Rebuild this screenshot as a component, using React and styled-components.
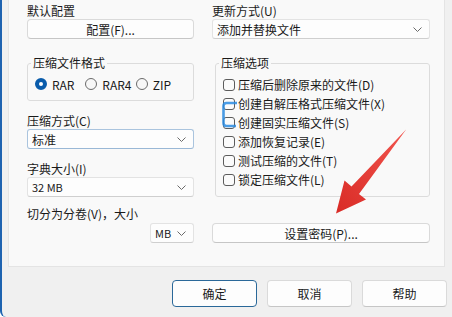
import styled, { createGlobalStyle } from "styled-components";

const GlobalStyle = createGlobalStyle`
  html, body { margin: 0; padding: 0; }
  body {
    font-family: "Noto Sans CJK SC", "Noto Sans", sans-serif;
    font-size: 12px;
    color: #1a1a1a;
  }
`;

const Window = styled.div`
  position: relative;
  width: 452px;
  height: 317px;
  overflow: hidden;
  box-sizing: border-box;
  background: #f0f0f0;
  border-left: 2px solid #1e63b0;
  border-bottom-left-radius: 6px;
  display: flex;
  flex-direction: column;
`;

const Panel = styled.div`
  margin-left: 6px;
  width: 437px;
  height: 267px;
  box-sizing: border-box;
  background: #f9f9f9;
  border: 1px solid #e4e4e4;
  border-top: none;
  padding-left: 18px;
  display: grid;
  grid-template-columns: 167px 218px;
  column-gap: 18px;
  align-items: start;
`;

const Column = styled.div`
  display: flex;
  flex-direction: column;
`;

const Label = styled.div`
  line-height: 16px;
  height: 16px;
  margin-top: ${(p) => p.$top || 0}px;
  white-space: nowrap;
`;

const Button = styled.button`
  height: ${(p) => p.$h || 20}px;
  width: ${(p) => (p.$w ? `${p.$w}px` : "100%")};
  margin-top: ${(p) => p.$top || 0}px;
  padding: 0;
  box-sizing: border-box;
  font-family: inherit;
  font-size: 12px;
  color: #1a1a1a;
  background: #fdfdfd;
  border: 1px solid ${(p) => (p.$primary ? "#2a6899" : "#dadada")};
  border-bottom-color: ${(p) => (p.$primary ? "#2a6899" : "#c6c6c6")};
  border-radius: 4px;
  display: flex;
  align-items: center;
  justify-content: center;
`;

const Select = styled.div`
  height: 20px;
  width: ${(p) => (p.$w ? `${p.$w}px` : "100%")};
  margin-top: ${(p) => p.$top || 0}px;
  align-self: ${(p) => (p.$w ? "flex-end" : "stretch")};
  box-sizing: border-box;
  padding: 0 7px 0 4px;
  background: #fdfdfd;
  border: 1px solid ${(p) => (p.$focus ? "#aac4de" : "#e3e3e3")};
  border-bottom-color: ${(p) => (p.$focus ? "#9ab8d6" : "#cfcfcf")};
  border-radius: 3px;
  display: flex;
  align-items: center;
  justify-content: space-between;
  font-size: ${(p) => (p.$small ? 11 : 12)}px;
`;

const Chevron = () => (
  <svg width="9" height="5" viewBox="0 0 9 5">
    <polyline points="0.5,0.5 4.5,4.5 8.5,0.5" fill="none" stroke="#6a6a6a" strokeWidth="1" />
  </svg>
);

const Group = styled.fieldset`
  margin: 17px 0 0 ${(p) => p.$left || 0}px;
  padding: ${(p) => p.$pad};
  border: 1px solid #dcdcdc;
  border-radius: 3px;
  min-width: 0;
  box-sizing: border-box;
`;

const Legend = styled.legend`
  padding: 0 2px;
  margin-left: -4px;
  line-height: 14px;
  font-size: 12px;
`;

const RadioRow = styled.div`
  display: flex;
  height: 16px;
  align-items: center;
`;

const RadioItem = styled.label`
  display: flex;
  align-items: center;
  gap: 5px;
  width: 55px;
  font-size: 12px;
`;

const RadioDot = styled.span`
  width: 12px;
  height: 12px;
  box-sizing: border-box;
  border-radius: 50%;
  flex: none;
  background: ${(p) => (p.$on ? "#fff" : "#f7f7f7")};
  border: ${(p) => (p.$on ? "4px solid #0a5cab" : "1px solid #6b6b6b")};
`;

const CheckRow = styled.label`
  display: flex;
  align-items: center;
  gap: 3px;
  height: 19px;
  white-space: nowrap;
`;

const CheckBox = styled.span`
  width: 12px;
  height: 12px;
  box-sizing: border-box;
  flex: none;
  border: 1px solid #5c5c5c;
  border-radius: 3px;
  background: #fbfbfb;
`;

const Footer = styled.div`
  display: flex;
  justify-content: flex-end;
  gap: 10px;
  margin-top: 13px;
  padding-right: 5px;
`;

const Overlay = styled.svg`
  position: absolute;
  left: -2px;
  top: 0;
  pointer-events: none;
`;

const options = [
  "压缩后删除原来的文件(D)",
  "创建自解压格式压缩文件(X)",
  "创建固实压缩文件(S)",
  "添加恢复记录(E)",
  "测试压缩的文件(T)",
  "锁定压缩文件(L)",
];

const formats = [
  { name: "RAR", on: true },
  { name: "RAR4" },
  { name: "ZIP" },
];

export default function App() {
  return (
    <>
      <GlobalStyle />
      <Window>
        <Panel>
          <Column>
            <Label $top={3}>默认配置</Label>
            <Button>配置(F)...</Button>
            <Group $pad="6px 7px 8px">
              <Legend>压缩文件格式</Legend>
              <RadioRow>
                {formats.map((f) => (
                  <RadioItem key={f.name}>
                    <RadioDot $on={f.on} />
                    {f.name}
                  </RadioItem>
                ))}
              </RadioRow>
            </Group>
            <Label $top={12}>压缩方式(C)</Label>
            <Select $focus>
              <span>标准</span>
              <Chevron />
            </Select>
            <Label $top={12}>字典大小(I)</Label>
            <Select $small>
              <span>32 MB</span>
              <Chevron />
            </Select>
            <Label $top={9}>切分为分卷(V)，大小</Label>
            <Select $w={44} $top={1} $small>
              <span>MB</span>
              <Chevron />
            </Select>
          </Column>

          <Column>
            <Label $top={3}>更新方式(U)</Label>
            <Select>
              <span>添加并替换文件</span>
              <Chevron />
            </Select>
            <Group $left={3} $pad="5px 7px 7px">
              <Legend>压缩选项</Legend>
              {options.map((o) => (
                <CheckRow key={o}>
                  <CheckBox />
                  {o}
                </CheckRow>
              ))}
            </Group>
            <Button $top={26}>设置密码(P)...</Button>
          </Column>
        </Panel>

        <Footer>
          <Button $w={85} $h={27} $primary>确定</Button>
          <Button $w={85} $h={27}>取消</Button>
          <Button $w={85} $h={27}>帮助</Button>
        </Footer>

        <Overlay width="452" height="317" viewBox="0 0 452 317">
          <defs>
            <linearGradient id="arrowFill" x1="1" y1="0" x2="0" y2="1">
              <stop offset="0" stopColor="#f2564f" />
              <stop offset="1" stopColor="#d92b26" />
            </linearGradient>
          </defs>
          <path
            d="M237 103 H226.5 Q223.5 103 223.5 106 V123 Q223.5 126 226.5 126 H236"
            fill="none"
            stroke="#2a8be0"
            strokeWidth="2.6"
            opacity="0.85"
          />
          <polygon
            points="408,127.5 406.5,129 359,194 366,199.5 336,213.5 344.5,180.5 351.5,186.5"
            fill="url(#arrowFill)"
          />
        </Overlay>
      </Window>
    </>
  );
}
